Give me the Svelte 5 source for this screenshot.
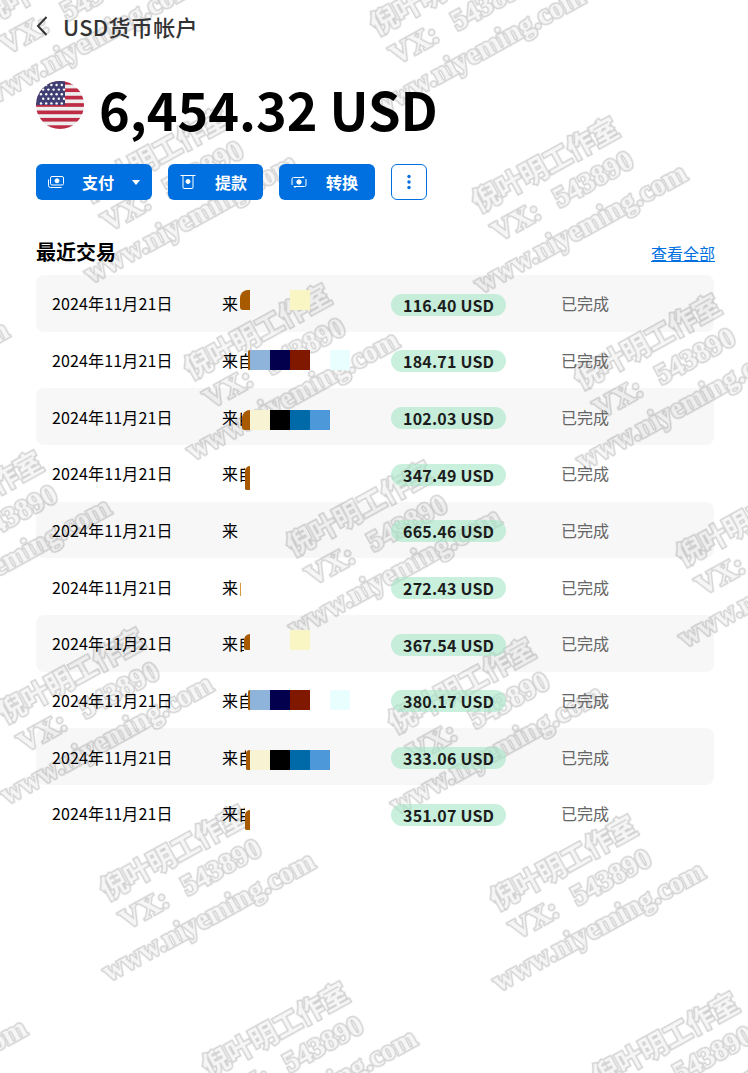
<script>
	const Y = '#f9f6c3';
	const blue = ['#8fb4dc', '#03004e', '#801800', null, '#e8feff'];
	const cream = ['#f7f3d3', '#000', '#006aa8', '#4c98d8'];
	// top: mosaic offset inside the row, mark: [width, height, top]
	const rows = [
		{ amount: '116.40', clip: 18, top: 15, mark: [10, 20, 0], blocks: [null, null, Y] },
		{ amount: '184.71', clip: 26, top: 18, mark: [2, 20, 0], blocks: blue },
		{ amount: '102.03', clip: 20, top: 22, mark: [8, 20, 0], blocks: cream },
		{ amount: '347.49', clip: 23, top: 21, mark: [5, 24, 0], blocks: [] },
		{ amount: '665.46', clip: 16, top: 0, mark: null, blocks: [] },
		{ amount: '272.43', clip: 19, top: 0, mark: null, blocks: [] },
		{ amount: '367.54', clip: 22, top: 15, mark: [6, 16, 4], blocks: [null, null, Y] },
		{ amount: '380.17', clip: 26, top: 18, mark: [2, 20, 0], blocks: blue },
		{ amount: '333.06', clip: 24, top: 22, mark: [4, 20, 0], blocks: cream },
		{ amount: '351.07', clip: 23, top: 25, mark: [5, 20, 0], blocks: [] }
	];

	// watermark repeats on a slanted lattice
	const stamps = [];
	for (let r = -1; r < 8; r++) {
		for (let c = -2; c < 4; c++) {
			stamps.push({ x: 108 + 102 * (r - 5) + 390 * (c + 1), y: 997 + 177 * (r - 5) + 10 * (c + 1) });
		}
	}

	const stripes = [0, 1, 2, 3, 4, 5, 6];
	const stars = [];
	for (let r = 0; r < 5; r++) {
		for (let c = 0; c < 5; c++) {
			stars.push({ x: 5 + c * 5.2 + (r % 2 ? 2.2 : 0), y: 4 + r * 4.6 });
		}
	}
</script>

<div class="marks" aria-hidden="true">
	{#each stamps as s}
		<div class="stamp" style="left: {s.x}px; top: {s.y - 115}px">
			<div class="zh">倪叶明工作室</div>
			<div class="vx">VX: 543890</div>
			<div>www.niyeming.com</div>
		</div>
	{/each}
</div>

<main class="page">
	<header class="top">
		<svg class="back" width="12" height="20" viewBox="0 0 12 20" fill="none" stroke="#333" stroke-width="2"><path d="M10.500 1 2 10l8.500 9" /></svg>
		<h1>USD货币帐户</h1>
	</header>

	<section class="balance">
		<svg class="flag" width="48" height="48" viewBox="0 0 48 48">
			<clipPath id="round"><circle cx="24" cy="24" r="24" /></clipPath>
			<g clip-path="url(#round)">
				<rect width="48" height="48" fill="#eeeeee" />
				{#each stripes as s}
					<rect y={s * 7.38} width="48" height="3.690" fill="#bd2c44" />
				{/each}
				<rect width="29" height="24" fill="#3f3f73" />
				{#each stars as st}
					<circle cx={st.x} cy={st.y} r="1.200" fill="#fff" />
				{/each}
			</g>
		</svg>
		<div class="amount">6,454.32 USD</div>
	</section>

	<div class="actions">
		<button class="btn pay">
			<svg width="16" height="16" viewBox="0 0 16 16" fill="none" stroke="#fff" stroke-width="1">
				<rect x="2.500" y="2.500" width="13" height="8.500" rx="1.500" />
				<path d="M0.500 5.500v6a2 2 0 0 0 2 2h11" />
				<circle cx="9" cy="6.800" r="2" fill="#fff" />
			</svg>
			<span>支付</span>
			<i class="caret"></i>
		</button>
		<button class="btn">
			<svg width="16" height="16" viewBox="0 0 16 16" fill="none" stroke="#fff" stroke-width="1">
				<path d="M0.500 1.500h15M3 1.500h10v12a1 1 0 0 1-1 1H4a1 1 0 0 1-1-1z" />
				<circle cx="8" cy="7.500" r="2" fill="#fff" />
			</svg>
			<span>提款</span>
		</button>
		<button class="btn swap">
			<svg width="16" height="16" viewBox="0 0 16 16" fill="none" stroke="#fff" stroke-width="1">
				<path d="M1 11V5a1.500 1.500 0 0 1 1.500-1.500H13l-1.500-1.500M15 5v6a1.500 1.500 0 0 1-1.500 1.500H3L4.500 14" />
				<circle cx="8" cy="8" r="2.200" fill="#fff" />
			</svg>
			<span>转换</span>
		</button>
		<button class="more" aria-label="更多">
			<svg width="4" height="16" viewBox="0 0 4 16" fill="#0070e0"><circle cx="2" cy="2.500" r="1.700" /><circle cx="2" cy="8" r="1.700" /><circle cx="2" cy="13.500" r="1.700" /></svg>
		</button>
	</div>

	<div class="list-head">
		<h2>最近交易</h2>
		<a href="#all">查看全部</a>
	</div>

	<div class="list">
		{#each rows as row}
			<div class="row">
				<div class="date">2024年11月21日</div>
				<div class="from">
					<div class="name" style="width: {row.clip}px">来自</div>
				</div>
				<div class="money"><span class="pill">{row.amount} USD</span></div>
				<div class="status">已完成</div>
				{#if row.mark}
					<div class="mosaic" style="top: {row.top}px">
						<i class="mark" style="width: {row.mark[0]}px; height: {row.mark[1]}px; top: {row.mark[2]}px"></i>
						{#each row.blocks as b}
							<i class="block" style="background: {b ?? 'transparent'}"></i>
						{/each}
					</div>
				{/if}
			</div>
		{/each}
	</div>
</main>

<style>
	:global(body) { margin: 0; background: #fff; }
	.page { position: relative; height: 1073px; padding: 0 34px 0 36px; box-sizing: border-box; font-family: "Noto Sans CJK SC", "Noto Sans", sans-serif; font-size: 16px; color: #000; }
	.top { display: flex; align-items: center; height: 52px; gap: 15px; }
	.back { flex: none; }
	h1 { margin: 0; font-size: 22px; font-weight: 500; line-height: 32px; letter-spacing: 0.3px; color: #333; }
	.balance { display: flex; align-items: center; gap: 15px; height: 60px; margin-top: 23px; }
	.flag { flex: none; }
	.amount { font-size: 52.2px; font-weight: 700; line-height: 60px; margin-top: 6px; white-space: nowrap; }
	.actions { display: flex; gap: 16px; margin-top: 29px; }
	.btn { display: flex; align-items: center; height: 36px; padding: 0 16px 0 12px; border: 0; border-radius: 6px; background: #0070e0; color: #fff; font: inherit; font-weight: 700; }
	.btn span { margin-left: 19px; }
	.btn.swap { padding-right: 17px; }
	.btn.pay { padding-right: 12px; }
	.btn.pay span { margin-left: 18px; }
	.caret { width: 0; height: 0; margin-left: 18px; border: 4px solid transparent; border-top: 5px solid #fff; border-bottom: 0; }
	.more { display: flex; align-items: center; justify-content: center; width: 36px; height: 36px; padding: 0; background: #fff; border: 1px solid #0070e0; border-radius: 6px; }
	.list-head { display: flex; justify-content: space-between; align-items: flex-end; margin-top: 38px; height: 29px; }
	h2 { margin: 0; font-size: 20px; font-weight: 700; line-height: 28px; transform: translateY(-1px); }
	.list-head a { color: #0070e0; line-height: 24px; margin-bottom: 2px; margin-right: -1px; }
	.list { margin-top: 8px; }
	.row { position: relative; display: grid; grid-template-columns: 170px 169px 170px 1fr; align-items: center; height: 56.67px; padding: 0 16px; box-sizing: border-box; border-radius: 8px; white-space: nowrap; }
	.row:nth-child(odd) { background: rgba(0, 0, 0, 0.03); }
	.date { letter-spacing: 0.15px; }
	.name { overflow: hidden; }
	.mosaic { position: absolute; left: 214px; display: flex; }
	.mark { position: absolute; right: 100%; background: #a85a00; border-radius: 8px 0 0 3px; }
	.block { flex: none; width: 20px; height: 20px; }
	.money { padding-top: 3px; }
	.pill { display: inline-block; padding: 0 12px; height: 22px; line-height: 22px; border-radius: 11px; background: rgba(163, 230, 198, 0.6); font-weight: 700; color: #1c1c1c; letter-spacing: 0.2px; }
	.status { color: #666; }
	.marks { position: absolute; inset: 0 0 auto 0; height: 1073px; pointer-events: none; overflow: hidden; }
	.stamp { position: absolute; width: 250px; transform-origin: 0 100%; transform: rotate(-29deg); text-align: center; font-family: "Liberation Serif", serif; font-size: 28.5px; font-weight: 700; line-height: 37px; white-space: nowrap; color: #f6f6f6; -webkit-text-stroke: 3px #d2d2d2; paint-order: stroke fill; filter: blur(0.4px); }
	.zh { font-family: "Noto Sans CJK SC", sans-serif; font-size: 27px; }
	.vx { font-size: 29px; word-spacing: 11px; }
</style>
